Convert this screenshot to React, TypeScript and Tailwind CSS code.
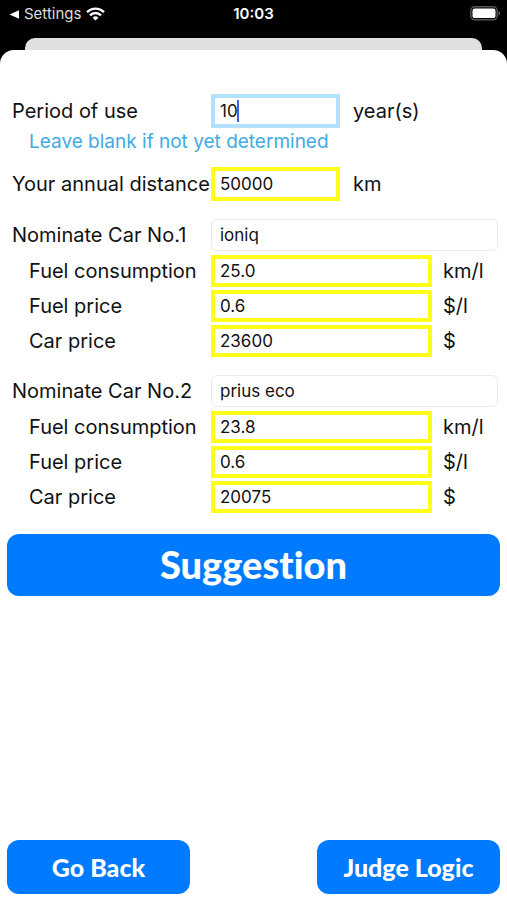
import { useState } from "react";

type Car = {
  id: number;
  name: string;
  consumption: string;
  fuelPrice: string;
  carPrice: string;
};

const INITIAL_CARS: Car[] = [
  { id: 1, name: "ioniq", consumption: "25.0", fuelPrice: "0.6", carPrice: "23600" },
  { id: 2, name: "prius eco", consumption: "23.8", fuelPrice: "0.6", carPrice: "20075" },
];

const CAR_FIELDS = [
  { key: "consumption", label: "Fuel consumption", unit: "km/l" },
  { key: "fuelPrice", label: "Fuel price", unit: "$/l" },
  { key: "carPrice", label: "Car price", unit: "$" },
] as const;

export default function App() {
  const [period, setPeriod] = useState("10");
  const [distance, setDistance] = useState("50000");
  const [cars, setCars] = useState(INITIAL_CARS);

  const updateCar = (id: number, patch: Partial<Car>) =>
    setCars((prev) => prev.map((car) => (car.id === id ? { ...car, ...patch } : car)));

  return (
    <div className="flex min-h-screen flex-col bg-black font-['Inter','Liberation_Sans',sans-serif]">
      <StatusBar />
      <div className="mx-[25px] h-3 rounded-t-[10px] bg-[#e0e0e0]" />

      <main className="flex flex-1 flex-col rounded-t-[14px] bg-white px-[7px] pt-11 pb-[6px] text-xl text-[#111]">
        <form className="pl-[5px]" onSubmit={(e) => e.preventDefault()}>
          <div className="flex items-center">
            <label htmlFor="period" className="w-[199px] shrink-0 whitespace-nowrap">
              Period of use
            </label>
            <div className="relative w-[129px]">
              <input
                id="period"
                value={period}
                onChange={(e) => setPeriod(e.target.value)}
                className="block h-[34px] w-full border-4 border-[#b3e0fa] px-[5px] text-[17px] caret-transparent outline-none"
              />
              <span className="pointer-events-none absolute top-[6px] left-[26px] h-[22px] w-[2px] bg-[#4060e0]" />
            </div>
            <span className="ml-[13px]">year(s)</span>
          </div>
          <p className="pl-[17px] text-[19px] leading-7 text-[#41abe1]">
            Leave blank if not yet determined
          </p>

          <div className="mt-[11px] flex items-center">
            <label htmlFor="distance" className="w-[199px] shrink-0 whitespace-nowrap">
              Your annual distance
            </label>
            <input
              id="distance"
              value={distance}
              onChange={(e) => setDistance(e.target.value)}
              className="block h-[34px] w-[129px] border-4 border-[#ffff1a] px-[5px] text-[17px] outline-none"
            />
            <span className="ml-[13px]">km</span>
          </div>

          {cars.map((car) => (
            <CarFields key={car.id} car={car} onChange={(patch) => updateCar(car.id, patch)} />
          ))}
        </form>

        <button
          type="button"
          className="mt-[21px] h-[62px] w-full rounded-xl bg-[#007aff] font-['Lato',sans-serif] text-[38px] font-black text-white [font-variant-ligatures:none]"
        >
          Suggestion
        </button>

        <div className="mt-auto flex justify-between gap-4">
          <FooterButton>Go Back</FooterButton>
          <FooterButton>Judge Logic</FooterButton>
        </div>
      </main>
    </div>
  );
}

function CarFields({ car, onChange }: { car: Car; onChange: (patch: Partial<Car>) => void }) {
  return (
    <div className="mt-[18px] flex flex-col gap-[3px]">
      <div className="flex items-center pr-[2px] pb-px">
        <label htmlFor={`name-${car.id}`} className="w-[199px] shrink-0 whitespace-nowrap">
          Nominate Car No.{car.id}
        </label>
        <input
          id={`name-${car.id}`}
          value={car.name}
          onChange={(e) => onChange({ name: e.target.value })}
          className="h-8 min-w-0 flex-1 rounded-md border border-[#ebebeb] px-2 text-[17px] outline-none"
        />
      </div>
      {CAR_FIELDS.map(({ key, label, unit }) => (
        <div key={key} className="flex items-center">
          <label
            htmlFor={`${key}-${car.id}`}
            className="w-[199px] shrink-0 pl-[17px] whitespace-nowrap"
          >
            {label}
          </label>
          <input
            id={`${key}-${car.id}`}
            value={car[key]}
            onChange={(e) => onChange({ [key]: e.target.value })}
            className="h-8 min-w-0 flex-1 border-4 border-[#ffff1a] px-[5px] text-[17px] outline-none"
          />
          <span className="w-[68px] shrink-0 pl-[11px]">{unit}</span>
        </div>
      ))}
    </div>
  );
}

function FooterButton({ children }: { children: string }) {
  return (
    <button
      type="button"
      className="h-[54px] w-[183px] rounded-xl bg-[#007aff] font-['Lato',sans-serif] text-[25px] font-black text-white"
    >
      {children}
    </button>
  );
}

function StatusBar() {
  return (
    <header className="grid h-[38px] grid-cols-3 items-start px-[9px] pt-1 text-white">
      <a href="#settings" className="flex items-center gap-[5px] text-[15px] leading-5 text-[#dedede]">
        <svg width="10" height="9" viewBox="0 0 10 9" fill="#fff">
          <path d="M0.5 4.5 10 0.3v8.4z" />
        </svg>
        Settings
        <svg width="19" height="14" viewBox="0 0 19 14" fill="none" stroke="#fff" strokeWidth="2.4">
          <path d="M1 5.1a12.2 12.2 0 0 1 17 0" />
          <path d="M4 8.3a7.8 7.8 0 0 1 11 0" />
          <path d="M9.5 13.6 6.6 10.7a4.1 4.1 0 0 1 5.8 0z" fill="#fff" stroke="none" />
        </svg>
      </a>
      <time className="text-center text-[15px] leading-5 font-semibold">10:03</time>
      <svg className="mt-[2px] mr-[-3px] justify-self-end" width="31" height="15" viewBox="0 0 31 15">
        <rect x="0.8" y="0.8" width="26.4" height="13" rx="4" fill="none" stroke="#555" strokeWidth="1.5" />
        <rect x="2.5" y="2.5" width="23" height="9.6" rx="2.2" fill="#fff" />
        <path d="M28.7 5c2 .8 2 3.8 0 4.6z" fill="#666" />
      </svg>
    </header>
  );
}
